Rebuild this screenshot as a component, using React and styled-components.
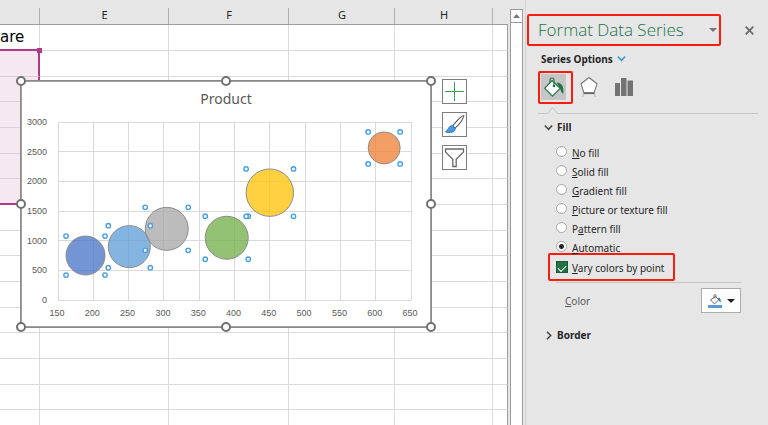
import React, { useState } from 'react'
import styled, { createGlobalStyle, css } from 'styled-components'

const GlobalStyle = createGlobalStyle`
    * {
        box-sizing: border-box;
    }

    body {
        margin: 0;
        background: #e6e6e6;
        color: #262626;
        font-family: "Noto Sans", "Open Sans", sans-serif;
        font-size: 10px;
    }

    button, input {
        margin: 0;
        padding: 0;
        font: inherit;
        color: inherit;
    }
`

const Window = styled.div`
    display: flex;
    height: 100vh;
    min-height: 400px;
    overflow: hidden;
`

const Sheet = styled.main`
    position: relative;
    flex: 1;
    min-width: 0;
    overflow: hidden;
`

const Grid = styled.table`
    width: 100%;
    table-layout: fixed;
    border-spacing: 0;
`

const Column = styled.col`
    width: ${({ $width }) => ($width ? `${$width}px` : 'auto')};
`

const ColumnHead = styled.th`
    height: 25px;
    padding: 6px 0 0;
    border-bottom: 1px solid #9c9c9c;
    background: linear-gradient(#b0b0b0, #b0b0b0) right bottom / 1px 16px no-repeat #e6e6e6;
    font-size: 11px;
    font-weight: 400;
    line-height: 16px;

    &:last-child {
        background: #e6e6e6;
    }
`

const Line = styled.tr`
    height: 26px;

    &:nth-child(3n) {
        height: 25px;
    }
`

const Cell = styled.td`
    padding: 0;
    border-right: 1px solid #dadada;
    border-bottom: 1px solid #dadada;
    background: #fff;
    color: #000;
    font-family: "DejaVu Sans", Verdana, sans-serif;
    font-size: 15px;
    line-height: 20px;

    &:last-child {
        border-right: 1px solid #9c9c9c;
    }

    ${({ $selected }) => $selected && css`
        background: #f5e8f0;
        border-right: 2px solid #b03a86;
        border-bottom-color: #dccfd7;
    `}

    ${({ $edge }) => $edge && css`
        border-bottom: 2px solid #b03a86;
    `}
`

const SelectionHandle = styled.span`
    position: absolute;
    top: 48px;
    left: 37px;
    width: 5px;
    height: 5px;
    background: #b03a86;
`

const ChartFrame = styled.section`
    position: absolute;
    top: 80px;
    left: 20px;
    width: 412px;
    height: 248px;
    border: 1px solid #8a8a8a;
    background: #fff;
    box-shadow: inset 0 0 0 1px #a0a0a0;
`

const ChartTitle = styled.h2`
    margin: 8px 0 0;
    color: #595959;
    font-size: 14px;
    font-weight: 400;
    line-height: 20px;
    text-align: center;
`

const Plot = styled.svg`
    display: block;
    width: 100%;
    font-family: "Liberation Sans", Arial, sans-serif;
    font-size: 9px;
    fill: #595959;
`

const Grip = styled.span`
    position: absolute;
    top: ${({ $y }) => $y};
    left: ${({ $x }) => $x};
    width: 10px;
    height: 10px;
    border: 2px solid #707070;
    border-radius: 50%;
    background: #fff;
    transform: translate(-50%, -50%);
`

const ChartTools = styled.div`
    position: absolute;
    top: 79px;
    left: 442px;
    display: grid;
    gap: 8px;
`

const ChartTool = styled.button`
    display: grid;
    place-items: center;
    width: 25px;
    height: 25px;
    border: 1px solid #7d7d7d;
    background: #fff;
`

const ScrollBar = styled.div`
    width: 13px;
    margin: 9px 0 0 2px;
    border: solid #9c9c9c;
    border-width: 1px 1px 0;
    background: #fff;
`

const ScrollUp = styled.button`
    display: grid;
    place-items: center;
    width: 100%;
    height: 13px;
    border: 0;
    border-bottom: 1px solid #9c9c9c;
    background: #fff;
`

const Pane = styled.aside`
    width: 243px;
    margin-left: 2px;
    border-left: 1px solid #d2d2d2;
    padding: 14px 10px 0 1px;
`

const PaneHeader = styled.header`
    display: flex;
    align-items: center;
    gap: 24px;
    padding-right: 4px;
`

const TitleBox = styled.div`
    display: flex;
    flex: 1;
    align-items: center;
    justify-content: space-between;
    height: 32px;
    padding: 0 2px 0 9px;
    border: 2px solid #fb1c0e;
    border-radius: 2px;
`

const PaneTitle = styled.h1`
    margin: 0;
    color: #217346;
    font-family: "Open Sans", "Noto Sans", sans-serif;
    font-size: 17px;
    font-weight: 300;
    line-height: 24px;
    white-space: nowrap;
`

const BareButton = styled.button`
    display: grid;
    place-items: center;
    height: 16px;
    border: 0;
    background: none;
`

const OptionsButton = styled.button`
    display: flex;
    align-items: center;
    gap: 4px;
    height: 25px;
    margin-left: 14px;
    border: 0;
    background: none;
    font-weight: 700;
`

const Tabs = styled.nav`
    display: flex;
    align-items: center;
    margin-left: 11px;
`

const Tab = styled.button`
    display: grid;
    place-items: center;
    width: 35px;
    height: 33px;
    border: 2px solid ${({ $active }) => ($active ? '#fb1c0e' : 'transparent')};
    border-radius: 2px;
    background: ${({ $active }) => ($active ? '#c6c6c6' : 'none')} content-box;
    padding: 1px 5px 2px 1px;
`

const TabRule = styled.svg`
    display: block;
    width: 220px;
    height: 9px;
    margin: 1px 0 5px 11px;
`

const SectionHeading = styled.button`
    display: flex;
    align-items: center;
    gap: 4px;
    height: 16px;
    margin-left: 17px;
    border: 0;
    background: none;
    font-weight: 700;
`

const FillOptions = styled.fieldset`
    margin: 7px 0 0 29px;
    padding: 0;
    border: 0;
`

const Option = styled.label`
    display: flex;
    align-items: center;
    gap: 5px;
    height: 19px;
`

const Radio = styled.input`
    appearance: none;
    width: 11px;
    height: 11px;
    border: 1px solid #a6a6a6;
    border-radius: 50%;
    background: #fff;

    &:checked {
        background: radial-gradient(#262626 0 2px, #fff 3px);
    }
`

const OptionText = styled.span`
    padding-top: 2px;
    line-height: 14px;
    white-space: nowrap;
`

const VaryOption = styled.label`
    display: flex;
    align-items: center;
    gap: 4px;
    width: 127px;
    height: 28px;
    margin: -3px 0 0 21px;
    padding-left: 6px;
    border: 2px solid #fb1c0e;
    border-radius: 2px;
`

const CheckBox = styled.input`
    appearance: none;
    display: grid;
    place-items: center;
    width: 12px;
    height: 12px;
    border: 1px solid #185c37;
    background: #217346;

    &:checked::after {
        content: "";
        width: 7px;
        height: 4px;
        border: solid #fff;
        border-width: 0 0 1px 1px;
        transform: rotate(-45deg);
    }
`

const ColorRow = styled.div`
    display: flex;
    align-items: center;
    justify-content: space-between;
    margin: 1px 17px 14px 29px;
    padding: 5px 0 0 9px;
    border-top: 1px solid #c6c6c6;
    color: #5a5a5a;
`

const ColorButton = styled.button`
    display: flex;
    align-items: center;
    justify-content: center;
    gap: 5px;
    width: 40px;
    height: 25px;
    border: 1px solid #ababab;
    background: #fff;
`

const COLUMNS = [
    { name: '', width: 40 },
    { name: 'E', width: 129 },
    { name: 'F', width: 120 },
    { name: 'G', width: 106 },
    { name: 'H', width: 98 },
    { name: '' },
]

const BUBBLES = [
    { x: 189, y: 750, r: 19.5, color: '#4472c4' },
    { x: 251, y: 900, r: 21, color: '#5b9bd5' },
    { x: 304, y: 1200, r: 21.5, color: '#a5a5a5' },
    { x: 389, y: 1050, r: 21.5, color: '#70ad47' },
    { x: 450, y: 1810, r: 23.7, color: '#ffc000' },
    { x: 612, y: 2565, r: 16, color: '#ed7d31' },
]

// [before the access key, access key, after it]
const FILLS = [
    ['', 'N', 'o fill'],
    ['', 'S', 'olid fill'],
    ['', 'G', 'radient fill'],
    ['', 'P', 'icture or texture fill'],
    ['P', 'a', 'ttern fill'],
    ['', 'A', 'utomatic'],
]

const GRIPS = ['0%', '50%', '100%']

const toX = (value) => 37 + (value - 150) * 0.706
const toY = (value) => 191 - value * 0.0593

const Caret = ({ color = '#444', size = 8 }) => (
    <svg width={size} height={size / 2} viewBox="0 0 8 4">
        <path d="M0 0h8L4 4z" fill={color} />
    </svg>
)

const Chevron = ({ color = '#444', right }) => (
    <svg width="9" height="9" viewBox="0 0 9 9" fill="none" stroke={color} strokeWidth="1.5">
        <path d={right ? 'M3 .8L6.7 4.5 3 8.2' : 'M.8 2.5l3.7 3.8 3.7-3.8'} />
    </svg>
)

const BucketIcon = () => (
    <svg width="24" height="25" viewBox="0 0 24 25">
        <path d="M14.5 7.5c5 .3 7.7 3.5 6.8 11.5-2-1.2-2.5-3.6-3.2-5.4z" fill="#217346" />
        <path d="M10 5.5l8.2 7.8-7.7 7.8L2.7 13.3z" fill="#fff" stroke="#217346" strokeWidth="1.2" />
        <path d="M8 8.2V4.8c0-2.4 4-2.4 4 0v5.4" fill="none" stroke="#217346" strokeWidth="1.1" />
        <circle cx="12" cy="11" r="1.3" fill="#217346" />
    </svg>
)

const PentagonIcon = () => (
    <svg width="20" height="22" viewBox="0 0 20 22">
        <path d="M10 1.5l8 6.3-3 9.2H5L2 7.8z" fill="#fff" stroke="#777" strokeWidth="1.1" />
        <path d="M4.5 17.2h11" stroke="#666" strokeWidth="1.8" />
        <path d="M4.5 18l-1 3M15.5 18l1 3" stroke="#b4b4b4" />
    </svg>
)

const BarsIcon = () => (
    <svg width="18" height="20" viewBox="0 0 18 20" fill="#737373">
        <path d="M0 6h5v13H0zM6 1h5.5v18H6zM12.5 3.5H18V19h-5.5z" />
    </svg>
)

const BrushIcon = () => (
    <svg width="21" height="21" viewBox="0 0 21 21">
        <path d="M19.8 1.5c-2.8.5-9 7.3-11 10.5l2.3 2.2c3-2.5 8.5-9 8.7-12.7z" fill="#fff" stroke="#666" strokeWidth="1.1" />
        <path d="M8.3 11.7c-3.3-.3-3.6 3.5-6.8 6.3 4.5 1 9.6.5 9.8-3.7z" fill="#4b9bdc" stroke="#2b75b5" />
    </svg>
)

const FunnelIcon = () => (
    <svg width="21" height="21" viewBox="0 0 21 21">
        <path d="M1.5 2h18v3l-7.3 7.2v7.3H8.8v-7.3L1.5 5z" fill="#fff" stroke="#686868" strokeWidth="1.3" />
    </svg>
)

const PlusIcon = () => (
    <svg width="19" height="19" viewBox="0 0 19 19">
        <path d="M9.5 0v19M0 9.5h19" stroke="#3ca35a" />
    </svg>
)

const FillColorIcon = () => (
    <svg width="14" height="14" viewBox="0 0 14 14">
        <path d="M7.3 2.5l3.5 3.2-4.2 4.2L2.5 6z" fill="#fff" stroke="#666" />
        <path d="M6 4.5V1.3c0-1 2-1 2 0v3" fill="none" stroke="#666" strokeWidth=".9" />
        <path d="M10 3.5c2.5.2 3 2.5 2.5 5.2l-2-3z" fill="#2b75b5" />
        <path d="M0 11h14v3H0z" fill="#5b9bd5" />
    </svg>
)

const BubblePlot = () => (
    <Plot viewBox="0 0 410 216" role="img" aria-label="Product">
        <g stroke="#d9d9d9" shapeRendering="crispEdges">
            {[...Array(11).keys()].map((i) => (
                <line key={i} x1={toX(150 + i * 50)} x2={toX(150 + i * 50)} y1={toY(3000)} y2={toY(0)} />
            ))}
            {[...Array(7).keys()].map((i) => (
                <line key={i} x1={toX(150)} x2={toX(650)} y1={toY(i * 500)} y2={toY(i * 500)} />
            ))}
        </g>

        {[...Array(7).keys()].map((i) => (
            <text key={i} x="26" y={toY(i * 500) + 3} textAnchor="end">{i * 500}</text>
        ))}
        {[...Array(11).keys()].map((i) => (
            <text key={i} x={toX(150 + i * 50) - 1} y="207" textAnchor="middle">{150 + i * 50}</text>
        ))}

        {BUBBLES.map(({ x, y, r, color }) => (
            <circle
                key={x}
                cx={toX(x)}
                cy={toY(y)}
                r={r}
                fill={color}
                fillOpacity=".75"
                stroke="#8c8c8c"
            />
        ))}
        {BUBBLES.map(({ x, y, r }) => (
            <g key={x} fill="#fff" stroke="#4a9fe0" strokeWidth="1.4">
                <circle cx={toX(x) - r} cy={toY(y) - r} r="2.2" />
                <circle cx={toX(x) + r} cy={toY(y) - r} r="2.2" />
                <circle cx={toX(x) - r} cy={toY(y) + r} r="2.2" />
                <circle cx={toX(x) + r} cy={toY(y) + r} r="2.2" />
            </g>
        ))}
    </Plot>
)

const Worksheet = () => (
    <Sheet>
        <Grid>
            <colgroup>
                {COLUMNS.map(({ name, width }, i) => <Column key={name + i} $width={width} />)}
            </colgroup>
            <thead>
                <tr>
                    {COLUMNS.map(({ name }, i) => <ColumnHead key={name + i}>{name}</ColumnHead>)}
                </tr>
            </thead>
            <tbody>
                {[...Array(16).keys()].map((row) => (
                    <Line key={row}>
                        {COLUMNS.map(({ name }, i) => (
                            <Cell
                                key={name + i}
                                $selected={i === 0 && row > 0 && row < 7}
                                $edge={i === 0 && (row === 0 || row === 6)}
                            >
                                {i === 0 && row === 0 && 'are'}
                            </Cell>
                        ))}
                    </Line>
                ))}
            </tbody>
        </Grid>
        <SelectionHandle />

        <ChartFrame>
            <ChartTitle>Product</ChartTitle>
            <BubblePlot />
            {GRIPS.map((x) => GRIPS.map((y) => (
                (x !== '50%' || y !== '50%') && <Grip key={x + y} $x={x} $y={y} />
            )))}
        </ChartFrame>

        <ChartTools>
            <ChartTool aria-label="Chart Elements"><PlusIcon /></ChartTool>
            <ChartTool aria-label="Chart Styles"><BrushIcon /></ChartTool>
            <ChartTool aria-label="Chart Filters"><FunnelIcon /></ChartTool>
        </ChartTools>
    </Sheet>
)

const FormatPane = () => {
    const [fill, setFill] = useState(5)
    const [vary, setVary] = useState(true)

    return (
        <Pane>
            <PaneHeader>
                <TitleBox>
                    <PaneTitle>Format Data Series</PaneTitle>
                    <BareButton aria-label="Task Pane Options"><Caret color="#777" /></BareButton>
                </TitleBox>
                <BareButton aria-label="Close">
                    <svg width="9" height="9" viewBox="0 0 9 9" stroke="#6a6a6a" strokeWidth="1.8">
                        <path d="M.7.7l7.6 7.6M8.3.7L.7 8.3" />
                    </svg>
                </BareButton>
            </PaneHeader>

            <OptionsButton>
                Series Options
                <Chevron color="#3a96d0" />
            </OptionsButton>

            <Tabs>
                <Tab $active aria-label="Fill & Line"><BucketIcon /></Tab>
                <Tab aria-label="Effects"><PentagonIcon /></Tab>
                <Tab aria-label="Series Options"><BarsIcon /></Tab>
            </Tabs>
            <TabRule viewBox="0 0 220 9" fill="none" stroke="#c6c6c6">
                <path d="M0 8.5h9.5l5-6 5 6H220" />
            </TabRule>

            <SectionHeading>
                <Chevron />
                Fill
            </SectionHeading>
            <FillOptions>
                {FILLS.map(([before, key, after], i) => (
                    <Option key={key + after}>
                        <Radio type="radio" name="fill" checked={fill === i} onChange={() => setFill(i)} />
                        <OptionText>
                            {before}
                            <u>{key}</u>
                            {after}
                        </OptionText>
                    </Option>
                ))}
            </FillOptions>
            <VaryOption>
                <CheckBox type="checkbox" checked={vary} onChange={() => setVary(!vary)} />
                <OptionText>
                    <u>V</u>
                    ary colors by point
                </OptionText>
            </VaryOption>

            <ColorRow>
                <span id="color-label">
                    <u>C</u>
                    olor
                </span>
                <ColorButton aria-labelledby="color-label">
                    <FillColorIcon />
                    <Caret color="#222" size={8} />
                </ColorButton>
            </ColorRow>

            <SectionHeading>
                <Chevron right />
                Border
            </SectionHeading>
        </Pane>
    )
}

const App = () => (
    <>
        <GlobalStyle />
        <Window>
            <Worksheet />
            <ScrollBar>
                <ScrollUp aria-label="Scroll up">
                    <svg width="7" height="4" viewBox="0 0 7 4"><path d="M0 4h7L3.5 0z" fill="#777" /></svg>
                </ScrollUp>
            </ScrollBar>
            <FormatPane />
        </Window>
    </>
)

export default App
